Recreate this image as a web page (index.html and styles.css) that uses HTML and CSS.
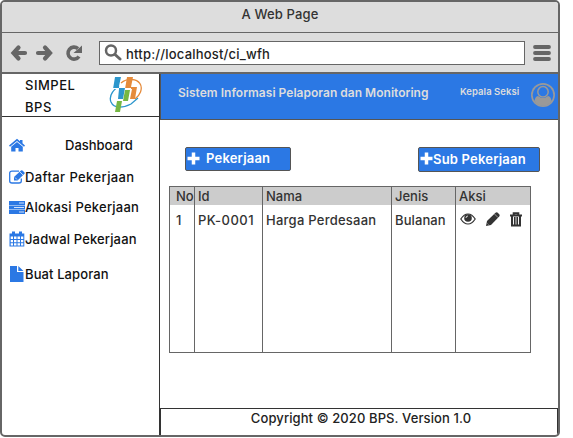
FILE: index.html
```html
<!DOCTYPE html>
<html lang="id">
<head>
<meta charset="utf-8">
<title>A Web Page</title>
<link rel="stylesheet" href="styles.css">
</head>
<body>
<div class="window">
  <div class="titlebar"><span>A Web Page</span></div>
  <div class="toolbar">
    <svg class="nav" width="76" height="18" viewBox="0 0 76 18" fill="none" stroke="#666" stroke-width="4.2" stroke-linecap="round">
      <path d="M5 9H16M9.500 3.500L4.500 9L9.500 14.500M29 9H40M36 3.500L41 9L36 14.500"/>
      <path stroke-linecap="butt" stroke-width="3.6" d="M70 12.500A6 6 0 1 1 69 4.600"/>
      <path fill="#666" stroke="none" d="M73 1.500V9H64.500Z"/>
    </svg>
    <div class="address">
      <svg width="18" height="18" viewBox="0 0 18 18" fill="none" stroke="#666"><circle cx="7" cy="6.500" r="5" stroke-width="2.500"/><path d="M11 10.500L16 15" stroke-width="3" stroke-linecap="round"/></svg>
      <span>http://localhost/ci_wfh</span>
    </div>
    <svg class="menu" width="20" height="18" viewBox="0 0 20 18" stroke="#666" stroke-width="3.800" stroke-linecap="round"><path d="M3 3H17M3 9H17M3 15H17"/></svg>
  </div>
  <div class="content">
    <aside class="sidebar">
      <div class="brand">
        <div class="brand-name">SIMPEL<br>BPS</div>
        <svg class="logo" width="34" height="37" viewBox="0 0 34 37">
          <g fill="none" stroke-width="1.300"><path stroke="#e58b3b" d="M12 7Q17 3 23 3.500C30 4 34 9 31.500 16Q30 20 26 23"/><path stroke="#2c96cc" d="M10 10C3 15 0 21 2 26C5 33 14 32 22 28L29 22" /></g>
          <path fill="#2c96cc" d="M6 1H12L10 10V12H16L14 23H9L10 13H4Z"/>
          <path fill="#e58b3b" d="M18 1H24L22 11H28L26 23H21L23 13H16Z"/>
          <path fill="#75b743" d="M16 14H21L19 25H13L11 36H6L8 25H14Z"/>
          <path stroke="#fff" d="M4 12.500H10M16 12.500H22M14 24.500H8"/>
        </svg>
      </div>
      <nav>
        <a class="item home"><svg width="16" height="14" viewBox="0 0 16 14"><path fill="#2b78e4" d="M8 4L13.800 8.800V13.500H9.500V10H6.500V13.500H2.200V8.800ZM8 .8L11 3.300V2H13.500V5.300L16 7.500L15 8.700L8 3L1 8.700L0 7.500Z"/></svg><span>Dashboard</span></a>
        <a class="item daftar"><svg width="16" height="14" viewBox="0 0 16 14"><path fill="none" stroke="#2b78e4" stroke-width="1.300" d="M10 1.200H3Q.7 1.200 .7 3V11Q.7 13 3 13H10Q12.300 13 12.300 11V8.500"/><path fill="#2b78e4" d="M5 7L12 .5Q12.800 0 13.500.5L15.500 2.500Q16 3 15.500 3.800L8.500 10.500H5Z"/><path stroke="#fff" stroke-width=".7" d="M11 2L14 5M6 7.500L8 9.500"/></svg><span>Daftar Pekerjaan</span></a>
        <a class="item alokasi"><svg width="16" height="14" viewBox="0 0 16 14"><path fill="#2b78e4" d="M0 1H16V5H0ZM0 5.500H16V9.500H0ZM0 10H16V14H0Z"/><path stroke="#fff" stroke-width=".8" d="M10 3H15M5 7.500H15M10 12H15"/></svg><span>Alokasi Pekerjaan</span></a>
        <a class="item jadwal"><svg width="16" height="16" viewBox="0 0 16 16"><path fill="#2b78e4" d="M1 2.500H3V.5H6V2.500H10V.5H13V2.500H15.300V15.500H.5V2.500Z"/><path fill="#fff" d="M1.700 5.500H4V8H1.700ZM5 5.500H7.500V8H5ZM8.500 5.500H11V8H8.500ZM12 5.500H14.300V8H12ZM1.700 9H4V11.300H1.700ZM5 9H7.500V11.300H5ZM8.500 9H11V11.300H8.500ZM12 9H14.300V11.300H12ZM1.700 12.300H4V14.500H1.700ZM5 12.300H7.500V14.500H5ZM8.500 12.300H11V14.500H8.500ZM12 12.300H14.300V14.500H12Z"/></svg><span>Jadwal Pekerjaan</span></a>
        <a class="item buat"><svg width="16" height="16" viewBox="0 0 16 16"><path fill="#2b78e4" d="M1 0H8V6H14.500V16H1ZM9.300 0L14.500 5H9.300Z"/></svg><span>Buat Laporan</span></a>
      </nav>
    </aside>
    <main class="main">
      <header class="header">
        <span class="app-title">Sistem Informasi Pelaporan dan Monitoring</span>
        <span class="role">Kepala Seksi</span>
        <svg width="26" height="26" viewBox="0 0 26 26"><circle cx="13" cy="13" r="12" fill="#999"/><circle cx="13" cy="13" r="10.300" fill="#2b78e4"/><path fill="#999" d="M4.500 19Q5 14.500 8 14Q13 18 18 14Q21 14.500 21.500 19Q18.500 23.800 13 23.800T4.500 19Z"/><circle cx="13" cy="9.800" r="5.200" fill="#2b78e4" stroke="#999" stroke-width="1.500"/></svg>
      </header>
      <div class="actions">
        <button class="btn"><svg width="13" height="13" viewBox="0 0 13 13"><path stroke="#fff" stroke-width="3.500" d="M6.500 .5V12.500M.5 6.500H12.500"/></svg><span>Pekerjaan</span></button>
        <button class="btn sub"><svg width="13" height="13" viewBox="0 0 13 13"><path stroke="#fff" stroke-width="3.500" d="M6.500 .5V12.500M.5 6.500H12.500"/></svg><span>Sub Pekerjaan</span></button>
      </div>
      <table>
        <colgroup><col class="c-no"><col class="c-id"><col class="c-name"><col class="c-type"><col class="c-act"></colgroup>
        <thead><tr><th>No</th><th>Id</th><th>Nama</th><th>Jenis</th><th>Aksi</th></tr></thead>
        <tbody><tr><td>1</td><td class="code">PK-0001</td><td class="name">Harga Perdesaan</td><td class="type">Bulanan</td><td>
          <div class="icons">
            <svg width="16" height="12" viewBox="0 0 16 12"><path fill="none" stroke="#333" stroke-width="1.200" d="M.8 6Q4 1 8 1T15.200 6Q12 11 8 11T.8 6Z"/><circle cx="8" cy="5" r="3.800" fill="#333"/><path fill="none" stroke="#fff" stroke-width=".8" d="M6 5Q6 3 8 3"/></svg>
            <svg width="14" height="14" viewBox="0 0 14 14"><path fill="#333" d="M0 14L1 9L9.500.8Q10.700-.2 11.800.8L13.200 2.200Q14.200 3.300 13.200 4.500L5 13Z"/><path stroke="#fff" stroke-width=".5" d="M8.500 2L12 5.500M1.500 11.500L2.500 12.500"/></svg>
            <svg width="12" height="15" viewBox="0 0 12 15"><path fill="none" stroke="#333" stroke-width="2" d="M0 3.500H12M3.700 3V1.200H8.300V3M2 4V13.500H10V4"/><path stroke="#333" stroke-width="1.100" d="M4.500 5V13M6 5V13M7.500 5V13"/></svg>
          </div></td></tr></tbody>
      </table>
      <footer>Copyright © 2020 BPS. Version 1.0</footer>
    </main>
  </div>
</div>
</body>
</html>
```
FILE: styles.css
```css
* { box-sizing: border-box; }
body { margin: 0; background: #fff; font: 500 13px/16px Inter, "Liberation Sans", sans-serif; color: #111; overflow: hidden; white-space: nowrap; }
svg { display: block; flex: none; }
.window { width: 560px; height: 437px; border: 2px solid #666; border-radius: 5px; display: flex; flex-direction: column; overflow: hidden; }
.titlebar { height: 31px; flex: none; background: #ddd; border-bottom: 1px solid #666; text-align: center; padding-top: 4px; color: #333; letter-spacing: .15px; }
.toolbar { height: 41px; flex: none; background: #ddd; border-bottom: 2px solid #666; display: flex; align-items: center; }
.nav { margin-left: 7px; }
.address { width: 426px; height: 24px; margin-left: 14px; border: 1px solid #666; background: #fff; display: flex; align-items: center; color: #222; }
.address svg { margin-left: 4px; }
.address span { margin-left: 4px; padding-top: 2px; letter-spacing: .2px; }
.menu { margin-left: 7px; }
.content { flex: 1; min-height: 0; display: flex; }
.sidebar { width: 158px; border-right: 1px solid #333; flex: none; }
.brand { height: 43px; border-bottom: 1px solid #333; display: flex; padding-left: 23px; }
.brand-name { width: 84px; line-height: 22px; letter-spacing: .5px; }
.logo { margin-top: 2px; }
nav { display: flex; flex-direction: column; padding: 20px 0 0 7px; }
.item { display: flex; align-items: center; height: 16px; }
.home span { margin-left: 40px; }
.daftar { margin-top: 16px; letter-spacing: .4px; }
.alokasi { margin-top: 14px; letter-spacing: .22px; }
.jadwal { margin-top: 16px; letter-spacing: .14px; }
.buat { margin-top: 19px; letter-spacing: .1px; }
.main { flex: 1; min-width: 0; display: flex; flex-direction: column; }
.header { height: 46px; flex: none; background: #2b78e4; border-bottom: 1px solid #555; border-left: 1px solid #555; display: flex; align-items: flex-start; color: #ddd; }
.app-title { width: 282px; margin: 11px 0 0 17px; font-size: 12px; font-weight: 600; letter-spacing: .02px; }
.role { width: 70px; margin-top: 10px; font-size: 9.5px; font-weight: 600; letter-spacing: .05px; }
.header svg { margin-top: 8px; }
.actions { height: 66px; flex: none; display: flex; align-items: flex-start; justify-content: space-between; padding: 27px 18px 0 25px; }
.btn { width: 106px; height: 24px; padding: 0 1px 2px; border: 1px solid #555; border-radius: 2px; background: #2b78e4; color: #fff; font: inherit; font-weight: 600; letter-spacing: .2px; display: flex; align-items: center; }
.btn span { margin-left: 6px; }
.btn.sub { width: 122px; height: 25px; }
.btn.sub span { margin-left: 0; }
table { width: 362px; height: 167px; margin-left: 9px; border-collapse: collapse; table-layout: fixed; border: 1px solid #666; color: #333; }
.c-no { width: 25px; }
.c-id { width: 68px; }
.c-name { width: 129px; }
.c-type { width: 64px; }
th, td { padding: 0 0 0 3px; border-left: 1px solid #666; text-align: left; vertical-align: top; font-weight: 500; }
th { height: 18px; background: #ccc; padding-top: 1px; }
td { padding-top: 7px; }
.code { letter-spacing: .5px; }
.name { letter-spacing: .25px; }
.type { letter-spacing: .1px; }
th:first-child, td:first-child { padding-left: 6px; }
.icons { display: flex; align-items: center; gap: 10px; padding-left: 1px; }
footer { height: 28px; margin-top: auto; margin-bottom: -1px; border: 1px solid #333; text-align: center; padding: 1px 0 0 4px; color: #222; letter-spacing: .1px; }
```
